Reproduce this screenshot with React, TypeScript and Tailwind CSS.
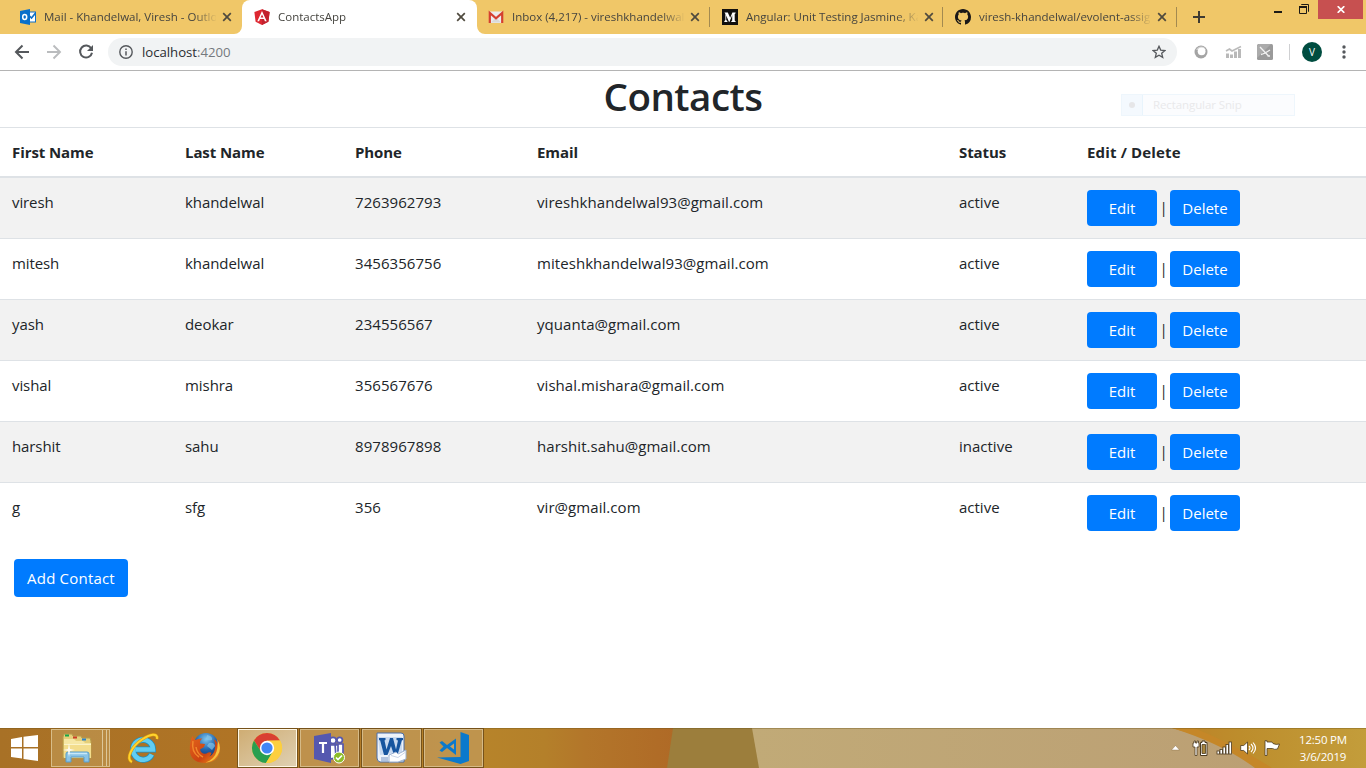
import React from 'react';

type Contact = { first: string; last: string; phone: string; email: string; status: string };

const contacts: Contact[] = [
  { first: 'viresh', last: 'khandelwal', phone: '7263962793', email: 'vireshkhandelwal93@gmail.com', status: 'active' },
  { first: 'mitesh', last: 'khandelwal', phone: '3456356756', email: 'miteshkhandelwal93@gmail.com', status: 'active' },
  { first: 'yash', last: 'deokar', phone: '234556567', email: 'yquanta@gmail.com', status: 'active' },
  { first: 'vishal', last: 'mishra', phone: '356567676', email: 'vishal.mishara@gmail.com', status: 'active' },
  { first: 'harshit', last: 'sahu', phone: '8978967898', email: 'harshit.sahu@gmail.com', status: 'inactive' },
  { first: 'g', last: 'sfg', phone: '356', email: 'vir@gmail.com', status: 'active' },
];

const OutlookIcon = () => (
  <svg width="16" height="16" viewBox="0 0 16 16">
    <rect x="8" y="3" width="7.5" height="10" fill="#fff" stroke="#0f6fc6" />
    <path d="M9.500 7l2 2 4-5" fill="none" stroke="#0f6fc6" strokeWidth="1.600" />
    <path d="M0 2l10-2v16L0 14z" fill="#0a70ca" />
    <ellipse cx="4.700" cy="8" rx="2" ry="2.500" fill="none" stroke="#fff" strokeWidth="1.500" />
  </svg>
);
const AngularIcon = () => (
  <svg width="16" height="16" viewBox="0 0 16 16">
    <path d="M8 .2l7.600 2.700-1.200 9.800L8 16l-6.400-3.300L.4 2.900z" fill="#dd2731" />
    <path d="M8 .2l7.600 2.700-1.200 9.800L8 16z" fill="#c3222e" />
    <path d="M8 2L3.300 12.300h1.800l.9-2.300h4l.9 2.300h1.800zM8 5.400l1.400 3.200H6.600z" fill="#fff" fillRule="evenodd" />
  </svg>
);
const GmailIcon = () => (
  <svg width="16" height="16" viewBox="0 0 16 16">
    <rect x="1" y="2.500" width="14" height="11.500" fill="#ececec" />
    <path d="M3 13.500l5-5 5 5z" fill="#dadada" />
    <path d="M1.800 14V4L8 9.300 14.200 4v10" fill="none" stroke="#d5402f" strokeWidth="2.200" />
  </svg>
);
const MediumIcon = () => (
  <svg width="16" height="16" viewBox="0 0 16 16">
    <rect width="16" height="16" fill="#12100e" />
    <path d="M2.500 3.500h3.300l2.400 5.200 2.200-5.200h3.200v.7l-.9.7v6.700l.9.700v.7H9.300v-.7l.9-.7V6.200L7.400 13H7L4.200 6.500v4.400l1.200 1.400v.7H2.300v-.7l1.100-1.400V5z" fill="#fff" />
  </svg>
);
const GithubIcon = () => (
  <svg width="16" height="16" viewBox="0 0 16 16" fill="#191717">
    <path d="M8 0C3.580 0 0 3.580 0 8c0 3.540 2.290 6.530 5.470 7.590.4.070.55-.17.55-.38 0-.19-.01-.82-.01-1.490-2.010.37-2.530-.49-2.690-.94-.09-.23-.48-.94-.82-1.130-.28-.15-.68-.52-.01-.53.63-.01 1.080.58 1.230.82.72 1.210 1.870.87 2.330.66.07-.52.28-.87.51-1.070-1.780-.2-3.640-.89-3.640-3.950 0-.87.31-1.590.82-2.150-.08-.2-.36-1.020.08-2.120 0 0 .67-.21 2.200.82.64-.18 1.320-.27 2-.27s1.360.09 2 .27c1.530-1.040 2.200-.82 2.200-.82.44 1.100.16 1.920.08 2.120.51.56.82 1.270.82 2.150 0 3.070-1.870 3.750-3.650 3.950.29.25.54.73.54 1.480 0 1.070-.01 1.930-.01 2.200 0 .21.15.46.55.38A8.010 8.010 0 0016 8c0-4.420-3.580-8-8-8z" />
  </svg>
);
const CloseIcon = () => (
  <svg width="10" height="10" viewBox="0 0 10 10" className="shrink-0">
    <path d="M1.200 1.200l7.600 7.600M8.800 1.200L1.200 8.800" stroke="#4f4a3e" strokeWidth="1.700" />
  </svg>
);

function Tab({ icon, title, width, divider, active }: { icon: React.ReactNode; title: string; width: string; divider?: boolean; active?: boolean }) {
  return (
    <div className={`relative flex h-[34px] shrink-0 items-center pl-3 ${width} ${active ? 'rounded-t-lg bg-white' : ''}`}>
      {active && (
        <>
          <svg className="absolute bottom-0 -left-2" width="8" height="8"><path d="M8 0v8H0a8 8 0 008-8z" fill="#fff" /></svg>
          <svg className="absolute -right-2 bottom-0" width="8" height="8"><path d="M0 0v8h8a8 8 0 01-8-8z" fill="#fff" /></svg>
        </>
      )}
      <span className="w-4 shrink-0">{icon}</span>
      <span className="ml-2 w-[172px] overflow-hidden whitespace-nowrap text-[11.5px] leading-4 text-[#45443f] [mask-image:linear-gradient(to_right,black_150px,transparent_173px)]">{title}</span>
      <span className="ml-1.5"><CloseIcon /></span>
      {divider && <span className="absolute top-[7px] right-0 h-5 w-px bg-[#a38a50]" />}
    </div>
  );
}

function BrowserChrome() {
  return (
    <header className="shrink-0">
      <div className="flex h-[34px] items-start bg-[#f0c768] pl-2">
        <Tab icon={<OutlookIcon />} title="Mail - Khandelwal, Viresh - Outlook" width="w-[234px]" />
        <Tab icon={<AngularIcon />} title="ContactsApp" width="w-[235px]" active />
        <div className="-ml-px flex">
          <Tab icon={<GmailIcon />} title="Inbox (4,217) - vireshkhandelwal93" width="w-[234px]" divider />
          <Tab icon={<MediumIcon />} title="Angular: Unit Testing Jasmine, Karma" width="w-[233px]" divider />
          <Tab icon={<GithubIcon />} title="viresh-khandelwal/evolent-assignment" width="w-[234px]" divider />
        </div>
        <svg className="mt-[11px] ml-4" width="12" height="12"><path d="M6 0v12M0 6h12" stroke="#3f3b32" strokeWidth="2" /></svg>
        <div className="ml-auto flex items-start">
          <svg className="mt-[11px] mr-[17px]" width="8" height="2"><rect width="8" height="2" fill="#1c1a15" /></svg>
          <svg className="mt-1 mr-[9px]" width="10" height="10" viewBox="0 0 10 10">
            <path d="M2.500 1V.5h7v7H9M.5 3h7v6.500h-7z" fill="none" stroke="#1c1a15" />
            <path d="M0 3h8" stroke="#1c1a15" strokeWidth="2" />
          </svg>
          <div className="mr-[3px] flex h-[19px] w-[45px] items-center justify-center bg-[#c75050]">
            <svg width="8" height="7" viewBox="0 0 8 7"><path d="M.7.200l6.600 6.600M7.300.200L.7 6.800" stroke="#fff" strokeWidth="1.700" /></svg>
          </div>
        </div>
      </div>
      <div className="flex h-[37px] items-center border-b border-[#b4b4b4] bg-white pl-[14px]">
        <svg width="16" height="16" viewBox="0 0 16 16" fill="none" stroke="#55585c" strokeWidth="2"><path d="M15 8H2M8.500 1.500L2 8l6.500 6.500" /></svg>
        <svg className="ml-4" width="16" height="16" viewBox="0 0 16 16" fill="none" stroke="#babcbe" strokeWidth="1.900"><path d="M1 8h13M7.500 1.500L14 8l-6.500 6.500" /></svg>
        <svg className="ml-4" width="16" height="16" viewBox="0 0 16 16">
          <path d="M13.200 4.300A6 6 0 1014 8.800" fill="none" stroke="#55585c" strokeWidth="2" />
          <path d="M15 1v6H9z" fill="#55585c" />
        </svg>
        <div className="ml-[14px] flex h-7 w-[1069px] items-center rounded-full bg-[#f1f3f4] pr-[11px] pl-[11px]">
          <svg width="14" height="14" viewBox="0 0 14 14"><circle cx="7" cy="7" r="6.200" fill="none" stroke="#55585c" strokeWidth="1.400" /><path d="M7 6.200v4.300M7 3.500V5" stroke="#55585c" strokeWidth="1.500" /></svg>
          <span className="ml-[9px] text-[13.200px] leading-5 tracking-[-0.03px] text-[#2a2d31]">localhost<span className="text-[#75797e]">:4200</span></span>
          <svg className="ml-auto" width="14" height="14" viewBox="0 0 14 14"><path d="M7 1.300l1.700 3.800 4.200.4-3.200 2.800 1 4.100L7 10.200l-3.700 2.200 1-4.100L1.100 5.500l4.200-.4z" fill="none" stroke="#55585c" strokeWidth="1.300" /></svg>
        </div>
        <svg className="ml-[17px]" width="14" height="14" viewBox="0 0 14 14"><circle cx="7" cy="7" r="6.500" fill="#a4a4a4" /><path d="M2 5a6 6 0 018-3l2 3z" fill="#cfcfcf" /><circle cx="7.600" cy="6.300" r="3.900" fill="#fff" /></svg>
        <svg className="ml-[17px]" width="17" height="14" viewBox="0 0 17 14"><path d="M1 8.500h3V13H1zM5 9.500h3V13H5zM9 6.500h3V13H9zM13 4h3v9h-3z" fill="#b9b9b9" /><path d="M1 6l3.500-2L7 6l9-4.500" fill="none" stroke="#bbb" strokeWidth="1.700" /></svg>
        <svg className="ml-[15px]" width="16" height="16" viewBox="0 0 16 16"><rect width="16" height="16" rx="1.500" fill="#9a9a9a" /><path d="M0 14L14 0H2L0 2z" fill="#ababab" /><path d="M3 3l8.500 9M4 10.500Q7 10 13 6M10.500 12h2.500" fill="none" stroke="#f2f2f2" strokeWidth="1.300" /></svg>
        <span className="ml-4 h-4 w-px bg-[#cfd0d2]" />
        <span className="ml-3 flex size-5 items-center justify-center rounded-full bg-[#004d40] text-[10px] font-medium text-white">V</span>
        <svg className="ml-[20px]" width="4" height="14" fill="#55585c"><circle cx="2" cy="2" r="1.700" /><circle cx="2" cy="7" r="1.700" /><circle cx="2" cy="12" r="1.700" /></svg>
      </div>
    </header>
  );
}

const btn = 'h-9 w-[70px] rounded bg-[#007bff] text-[15px] leading-6 text-white';

function ContactsPage() {
  return (
    <main className="relative flex-1 bg-white text-[#212529]">
      <h1 className="h-14 pt-px text-center text-[38.5px] leading-[48px] font-semibold tracking-[-0.5px]">Contacts</h1>
      <table className="w-full table-fixed border-separate border-spacing-0 text-left text-[15px] leading-6">
        <colgroup>
          <col className="w-[173px]" /><col className="w-[170px]" /><col className="w-[182px]" />
          <col className="w-[422px]" /><col className="w-[128px]" /><col className="w-[291px]" />
        </colgroup>
        <thead>
          <tr>
            {['First Name', 'Last Name', 'Phone', 'Email', 'Status', 'Edit / Delete'].map((h) => (
              <th key={h} className="border-t border-b-2 border-[#dee2e6] p-3 font-bold tracking-[-0.08px] last:tracking-[0.15px]">{h}</th>
            ))}
          </tr>
        </thead>
        <tbody className="[&>tr:first-child>td]:border-t-0 [&>tr:nth-child(odd)]:bg-[#f2f2f2] [&_td]:border-t [&_td]:border-[#dee2e6] [&_td]:px-3 [&_td]:py-3 [&_td]:align-top">
          {contacts.map((c) => (
            <tr key={c.email}>
              <td className="tracking-[-0.1px]">{c.first}</td>
              <td className="tracking-[-0.06px]">{c.last}</td>
              <td className="tracking-[0.05px]">{c.phone}</td>
              <td className="tracking-[0.06px]">{c.email}</td>
              <td>{c.status}</td>
              <td>
                <div className="flex items-center">
                  <button className={btn}>Edit</button>
                  <span className="w-[13px] pb-[3px] text-center">|</span>
                  <button className={btn}>Delete</button>
                </div>
              </td>
            </tr>
          ))}
        </tbody>
      </table>
      <button className="mt-4 ml-[14px] h-[38px] w-[114px] rounded bg-[#007bff] text-[15px] tracking-[0.2px] whitespace-nowrap text-white">Add Contact</button>
      <div className="absolute top-[23px] left-[1121px] flex h-[22px] w-[174px] items-center border border-[#eef6fc] bg-[#fbfcfe] text-[11.5px] text-[#e9e9eb]">
        <span className="flex h-full w-[21px] items-center justify-center border-r border-[#e8f4fc] bg-[#f4f9fe]"><span className="size-1.5 rounded-full bg-[#e6e6e8]" /></span>
        <span className="ml-2.5 tracking-[-0.1px]">Rectangular Snip</span>
      </div>
    </main>
  );
}

const ExplorerIcon = () => (
  <svg width="34" height="32" viewBox="0 0 34 32">
    <path d="M3 5l1-3h8l1 2h8l1 2h8l1 3v17H3z" fill="#e5cf79" stroke="#b79b4b" />
    <path d="M4 7h10l2 2h7l2 2h6v15H4z" fill="#f6e7a4" />
    <path d="M4 13h27v13H4z" fill="#f3dd8c" /><path d="M4 12.500h27" stroke="#fbf3c7" />
    <rect x="5" y="2.500" width="4" height="2" fill="#17a647" /><rect x="13" y="4.500" width="4" height="2" fill="#cc3d28" /><rect x="22" y="6.500" width="4" height="2" fill="#2b83cc" />
    <path d="M6 30v-8q0-2 2-2h19q2 0 2 2v8h-5v-5H11v5z" fill="#8bc4e6" stroke="#5a9dca" />
    <path d="M8 21.500h19" stroke="#c9e8f8" strokeWidth="1.500" />
    <path d="M9 11l1 6 5 1-5 1-1 6-1-6-5-1 5-1z" fill="#fff" opacity=".85" />
  </svg>
);
const IeIcon = () => (
  <svg width="32" height="32" viewBox="0 0 32 32">
    <path d="M24.800 22.500A10 10 0 1126 17.500H8.500" fill="none" stroke="#198fc4" strokeWidth="6" />
    <path d="M24.800 22.500A10 10 0 1126 17.500H8.500" fill="none" stroke="#61cdf2" strokeWidth="4.600" />
    <path d="M5 30C-2 27 5 14 15 7.500 23 2 31 .5 30 7" fill="none" stroke="#dd9c0b" strokeWidth="3" />
    <path d="M5 30C-2 27 5 14 15 7.500 23 2 31 .5 30 7" fill="none" stroke="#ffd32e" strokeWidth="1.900" />
  </svg>
);
const FirefoxIcon = () => (
  <svg width="32" height="32" viewBox="0 0 32 32">
    <defs>
      <radialGradient id="ffb" cx=".5" cy=".25" r=".8"><stop offset="0" stopColor="#7bc4ef" /><stop offset=".5" stopColor="#2468b0" /><stop offset="1" stopColor="#122a66" /></radialGradient>
      <linearGradient id="ffo" x1="0" y1="0" x2="1" y2="1"><stop offset="0" stopColor="#e2641c" /><stop offset=".6" stopColor="#cc4412" /><stop offset="1" stopColor="#ef9b1d" /></linearGradient>
    </defs>
    <circle cx="17" cy="13.500" r="12.500" fill="url(#ffb)" />
    <path d="M18 3q6 1 5 5-4 1-6-1zM20 11q5-1 6 3l-3 4-5-4z" fill="#8cc8ea" opacity=".65" />
    <path d="M3.500 4q1 2.500 3 4 3-2 7-1.500-3 2-2.500 5l5 .5-1 3-4 2.500q1 5 6.500 4 3-2 5-.5-1 4-5 4 7-1 8.500-8 1-5-1-10 4 3 4 7 1-3-.5-7 3 4 2.500 11-1 12-14.500 13Q2 31 .8 19 .4 9 3.500 4z" fill="url(#ffo)" />
    <path d="M28.500 7.500q5 9 0 16-5 7-12 7 9-3 11-11 1.500-5 1-12z" fill="#f6c13d" />
    <path d="M4 9q-2 11 6 16M7 15q1 7 7 10" fill="none" stroke="#f1872b" strokeWidth="1.500" />
  </svg>
);
const ChromeIcon = () => (
  <svg width="32" height="32" viewBox="0 0 32 32">
    <circle cx="16" cy="16" r="15" fill="#f9cd30" />
    <path d="M16 16L9.900 19.500 3 8.500A15 15 0 0129 8.500L16 9z" fill="#d93f32" />
    <path d="M3 8.500A15 15 0 0015 31l7-11.500H10z" fill="#299f50" />
    <path d="M29 8.500H16l6 11L15 31A15 15 0 0029 8.500z" fill="#fccf3f" />
    <circle cx="16" cy="16" r="7.200" fill="#fff" /><circle cx="16" cy="16" r="5.600" fill="#4286f5" />
  </svg>
);
const TeamsIcon = () => (
  <svg width="32" height="32" viewBox="0 0 32 32">
    <g fill="#fff" stroke="#5558af" strokeWidth="1.700"><path d="M22 12h8v8q-1 5-7 5zM16 13h9v9q-1 5-9 5z" /><circle cx="20" cy="8.500" r="3.200" /><circle cx="26.700" cy="8" r="2.700" /></g>
    <path d="M1 4l17-3v30L1 27z" fill="#5558af" /><path d="M6 11h8M10 11v10" stroke="#fff" strokeWidth="2.200" />
    <circle cx="26" cy="25.500" r="5.500" fill="#8dbd29" stroke="#fff" /><path d="M23 25.500l2 2 4-4" fill="none" stroke="#fff" strokeWidth="1.700" />
  </svg>
);
const WordIcon = () => (
  <svg width="32" height="32" viewBox="0 0 32 32">
    <path d="M2 1h24q3 0 3 3v26H5q-3-1-3-4z" fill="#eef3fa" stroke="#4b6fa9" />
    <path d="M3 5h24v15L5 23z" fill="#c9daf0" />
    <path d="M4 6h6.500v2l-1 .5 2 9 3.500-11.500h3l3 11.500L23 8.500 21.500 8V6H28v2l-1.200.5L22.500 23H19l-3-9-3.500 9H9L5.200 8.500 4 8z" fill="#17559f" />
    <path d="M14 23l7-3 2 2 8-4v9l-8 3H14z" fill="#fff" stroke="#9bb0d0" /><path d="M16 23.500l7 2 7-5" fill="none" stroke="#cad5e7" />
    <path d="M6 26h7M6 28h7" stroke="#7694c5" />
  </svg>
);
const CodeIcon = () => (
  <svg width="34" height="34" viewBox="0 0 34 34">
    <path d="M24.500 1L33 4v26l-8.500 3L1 26.500l23.500-.5z" fill="#0b79cc" />
    <path d="M3.500 11.500L6 10l5 4 9-6.500V24l-9-7-5 4-2.500-1.500 4-4z" fill="#0b79cc" />
    <path d="M18 12.500v6L14 15.500z" fill="#c9a262" />
  </svg>
);

function TaskButton({ children, active }: { children: React.ReactNode; active?: boolean }) {
  return (
    <div className={`mr-[3px] flex h-[38px] w-[59px] items-center justify-center border pr-0.5 shadow-[0_0_0_1px_#76521a] ${active ? 'border-[#fff8e6] bg-linear-to-br from-[#cfad73] to-[#dfd0b2]' : 'border-[#d5ba87] bg-[#c29a5a]/75'}`}>
      {children}
    </div>
  );
}

function Taskbar() {
  return (
    <footer className="relative h-10 shrink-0 overflow-hidden">
      <svg className="absolute inset-0" width="1366" height="40">
        <defs>
          <linearGradient id="wood" gradientUnits="userSpaceOnUse" x1="0" y1="0" x2="680" y2="0"><stop offset="0" stopColor="#a87126" /><stop offset=".35" stopColor="#b07425" /><stop offset=".7" stopColor="#b7842a" /><stop offset=".8" stopColor="#b4802a" /><stop offset=".86" stopColor="#b3762a" /><stop offset="1" stopColor="#af6926" /></linearGradient>
          <linearGradient id="sand"><stop offset="0" stopColor="#c1aa77" /><stop offset="1" stopColor="#bb9f74" /></linearGradient>
          <linearGradient id="gold"><stop offset="0" stopColor="#bd8227" /><stop offset=".35" stopColor="#bd8d2c" /><stop offset="1" stopColor="#c39d3b" /></linearGradient>
        </defs>
        <rect width="680" height="40" fill="url(#wood)" />
        <path d="M673 0h80l7 40h-93z" fill="#9c7e3c" />
        <path d="M752 0h435l90 40H759z" fill="url(#sand)" />
        <path d="M1172 0h194v40h-100q-30-22-94-40z" fill="url(#gold)" />
        <path d="M1172 0h22q42 17 78 40h-17q-32-24-83-40z" fill="#c58728" />
        <rect width="1366" height="1" fill="#665018" opacity=".35" />
      </svg>
      <div className="relative flex h-full items-center">
        <svg className="mr-px ml-[11px]" width="27" height="26" viewBox="0 0 27 26"><path d="M0 4l11-2v10H0zM12.500 1.700L27 0v12H12.500zM0 13.500h11v10L0 22zM12.500 13.500H27V26l-14.500-2z" fill="#fff" /></svg>
        <div className="ml-3 flex h-[38px] w-[59px] border border-[#d8bd89] bg-[#c39c58]/60">
          <div className="flex w-[51px] items-center justify-center border-r border-[#ddc79a]"><ExplorerIcon /></div>
          <div className="w-[4px] border-r border-[#ddc79a]" />
        </div>
        <span className="ml-[17px]"><IeIcon /></span>
        <span className="ml-[30px]"><FirefoxIcon /></span>
        <div className="ml-[17px] flex">
          <TaskButton active><ChromeIcon /></TaskButton>
          <TaskButton><TeamsIcon /></TaskButton>
          <TaskButton><WordIcon /></TaskButton>
          <TaskButton><CodeIcon /></TaskButton>
        </div>
        <div className="ml-auto flex items-center pr-[16px]">
          <svg width="9" height="6" viewBox="0 0 9 6"><path d="M.5 5L4.500.5l4 4.500z" fill="#fff" stroke="#80643c" strokeWidth=".4" /></svg>
          <svg className="ml-[12px]" width="16" height="16" viewBox="0 0 16 16"><g stroke="#4b3b20"><path d="M1 3h1V1h1.500v2H5V1h1.500v2H7v4H5v8.500H3V7H1z" fill="#fff" strokeWidth=".8" /><path d="M8.500 2.500H10V1h3v1.500h2v13H8.500z" fill="#fff" /><path d="M10 4.500h3.500v9H10z" fill="#a8863f" strokeWidth=".8" /></g></svg>
          <svg className="ml-2" width="17" height="14" viewBox="0 0 17 14"><g fill="#fff" stroke="#4b3b20" strokeWidth=".8"><rect x="1" y="10" width="2.500" height="3" /><rect x="4" y="8.500" width="2.500" height="4.500" /><rect x="7" y="6" width="2.500" height="7" /><rect x="10" y="3.500" width="2.500" height="9.500" /><rect x="13" y="1" width="2.500" height="12" /></g></svg>
          <svg className="ml-[7px]" width="16" height="16" viewBox="0 0 16 16"><path d="M.7 5.500h3L7.500 2v12l-3.800-3.500h-3z" fill="#fff" stroke="#4b3b20" strokeWidth=".8" /><path d="M9 6q2 2 0 4M11 4q4 4 0 8M13 2.500q5 5.500 0 11" fill="none" stroke="#fff" strokeWidth="1.100" /></svg>
          <svg className="ml-2" width="17" height="16" viewBox="0 0 17 16"><path d="M1 .7h2V2h5l1 1.500q3 1.500 6.500.5L13.500 9q-3 1-5-.5H3v7H1z" fill="#fff" stroke="#4b3b20" strokeWidth=".8" /></svg>
          <div className="ml-[15px] w-[54px] text-center text-[11.500px] leading-[17px] tracking-[-0.2px] whitespace-nowrap text-white"><div>12:50 PM</div><div>3/6/2019</div></div>
        </div>
      </div>
    </footer>
  );
}

export default function App() {
  return (
    <div className="flex h-[768px] w-[1366px] flex-col overflow-hidden bg-white font-['Open_Sans','Noto_Sans',sans-serif]">
      <BrowserChrome />
      <ContactsPage />
      <Taskbar />
    </div>
  );
}
